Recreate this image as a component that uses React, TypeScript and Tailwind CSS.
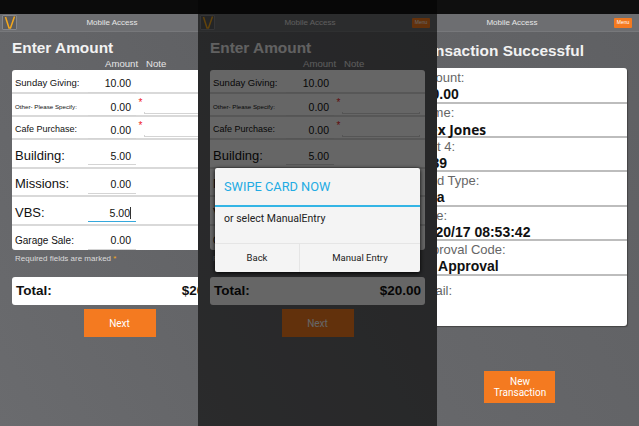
const rows = [
  { label: "Sunday Giving:", value: "10.00", h: "h-[24px]", labelClass: "text-[9.5px]" },
  { label: "Other- Please Specify:", value: "0.00", h: "h-[23px]", labelClass: "text-[6.2px]", note: true },
  { label: "Cafe Purchase:", value: "0.00", h: "h-[23px]", labelClass: "text-[9px]", note: true },
  { label: "Building:", value: "5.00", h: "h-[29px]", labelClass: "text-[13px]" },
  { label: "Missions:", value: "0.00", h: "h-[28px]", labelClass: "text-[13px]" },
  { label: "VBS:", value: "5.00", h: "h-[29px]", labelClass: "text-[13px]", active: true },
  { label: "Garage Sale:", value: "0.00", h: "h-[24px]", labelClass: "text-[10px]" },
];

const details = [
  { label: "Amount:", value: "$20.00", h: "h-[36px]", valueClass: "text-[14px]" },
  { label: "Name:", value: "Alex Jones", h: "h-[34px]", valueClass: "text-[13.7px] font-['Open_Sans',sans-serif]" },
  { label: "Last 4:", value: "6789", h: "h-[34px]", valueClass: "text-[14px]" },
  { label: "Card Type:", value: "Visa", h: "h-[35px]", valueClass: "text-[14px]" },
  { label: "Date:", value: "01/20/17 08:53:42", h: "h-[34px]", valueClass: "text-[14px]" },
  { label: "Approval Code:", value: "No Approval", h: "h-[35px]", valueClass: "text-[14px]" },
];

function Header() {
  return (
    <div className="flex h-[17px] items-center justify-between bg-[#6d6e71] pl-[2px] pr-[7px] shadow-[0_1px_0_#77787b]">
      <div className="flex h-[15px] w-[15px] items-center justify-center rounded-[1px] border border-[#85868a] bg-[#5b5c60]">
        <svg viewBox="0 0 12 13" className="h-[13px] w-[12px]">
          <path d="M1.5 1 L5 12 L6.5 12 L10.5 0.5" fill="none" stroke="#f5a81c" strokeWidth="1.5" />
        </svg>
      </div>
      <span className="mr-[7px] text-[8px] text-[#e6e6e6]">Mobile Access</span>
      <div className="flex h-[10px] w-[18px] items-center justify-center rounded-[1px] bg-[#f47a20] text-[5px] text-white">
        Menu
      </div>
    </div>
  );
}

function Underlined({ className, active, children }: { className: string; active?: boolean; children?: React.ReactNode }) {
  return (
    <div className={`flex h-[18px] shrink-0 flex-col ${className}`}>
      <div className="flex flex-1 items-center justify-end pr-[5px] pt-[4px] text-[10.5px] text-[#111]">{children}</div>
      <div className={`h-[2px] border border-t-0 ${active ? "border-[#35a8dc]" : "border-[#d4d4d4]"}`} />
    </div>
  );
}

function AmountRow({ row }: { row: (typeof rows)[number] }) {
  return (
    <div className={`flex items-center border-b-2 border-[#d9d9d9] pl-[3px] last:border-b-0 ${row.h}`}>
      <span className={`mt-[4px] w-[73px] shrink-0 whitespace-nowrap text-[#111] ${row.labelClass}`}>{row.label}</span>
      <Underlined className="w-[48px]" active={row.active}>
        {row.value}
        {row.active && <span className="h-[12px] w-px bg-[#333]" />}
      </Underlined>
      {row.note && (
        <>
          <span className="mb-[3px] ml-[1px] w-[7px] text-center text-[10px] leading-none text-[#f01c24]">*</span>
          <Underlined className="w-[78px]" />
        </>
      )}
    </div>
  );
}

function EnterAmount() {
  return (
    <div className="flex h-[412px] w-[239px] flex-col bg-[#636467] bg-gradient-to-tr from-[#6a6b6e] to-[#5f6063]">
      <Header />
      <div className="flex flex-col px-[12px]">
        <h1 className="mt-[8px] text-[15.4px] font-bold leading-[18px] text-[#f2f2f2]">Enter Amount</h1>
        <div className="mt-[2px] flex h-[11px] items-center pl-[93px] text-[9.6px] text-[#e6e6e6]">
          <span className="w-[41px]">Amount</span>
          <span>Note</span>
        </div>
        <div className="overflow-hidden rounded-[3px] bg-white">
          {rows.map((row) => (
            <AmountRow key={row.label} row={row} />
          ))}
        </div>
        <p className="mt-[4px] pl-[3px] text-[8px] leading-[10px] text-[#dcdcdc]">
          Required fields are marked <span className="text-[#f5a81c]">*</span>
        </p>
        <div className="mt-[13px] flex h-[28px] items-center justify-between rounded-[3px] bg-white px-[4px] text-[13.5px] font-bold text-[#111]">
          <span>Total:</span>
          <span>$20.00</span>
        </div>
        <button className="mx-auto mt-[4px] h-[28px] w-[72px] bg-[#f47a20] font-['Roboto',sans-serif] text-[10px] text-white">
          Next
        </button>
      </div>
    </div>
  );
}

function Success() {
  return (
    <div className="flex h-[412px] w-[239px] flex-col bg-[#636467] bg-gradient-to-tr from-[#67686b] to-[#5f6063]">
      <Header />
      <div className="flex flex-col px-[12px]">
        <h1 className="mt-[11px] whitespace-nowrap text-[15.4px] font-bold leading-[18px] text-[#f2f2f2]">
          Transaction Successful
        </h1>
        <div className="mt-[8px] overflow-hidden rounded-[3px] bg-white shadow-[1px_1px_1px_#444]">
          {details.map((d) => (
            <div key={d.label} className={`flex flex-col justify-center border-b-2 border-[#bdbdbd] px-[4px] pt-[2px] ${d.h}`}>
              <span className="text-[13px] leading-[16px] text-[#666]">{d.label}</span>
              <span className={`font-bold leading-[17px] text-[#111] ${d.valueClass}`}>{d.value}</span>
            </div>
          ))}
          <div className="h-[50px] px-[4px] pt-[2px]">
            <span className="text-[13px] leading-[16px] text-[#666]">Email:</span>
          </div>
        </div>
        <button className="mx-auto mt-[45px] h-[32px] w-[71px] bg-[#f47a20] pl-[1px] font-['Roboto',sans-serif] text-[10px] leading-[11px] text-white">
          New
          <br />
          Transaction
        </button>
      </div>
    </div>
  );
}

function SwipeDialog() {
  return (
    <div className="absolute left-[17px] top-[154px] w-[205px] rounded-[2px] bg-[#f4f4f4] font-['Roboto',sans-serif] shadow-[0_1px_4px_#000]">
      <div className="flex h-[39px] items-center border-b-2 border-[#33b5e5] pl-[9px] text-[12.8px] text-[#22abe3]">
        SWIPE CARD NOW
      </div>
      <div className="h-[36px] pl-[9px] pt-[5px] text-[10.5px] leading-[14px] text-[#222]">or select ManualEntry</div>
      <div className="flex h-[29px] border-t border-[#e5e5e5] text-[9.5px] text-[#222]">
        <div className="flex w-[85px] items-center justify-center border-r border-[#e5e5e5]">Back</div>
        <div className="flex flex-1 items-center justify-center">Manual Entry</div>
      </div>
    </div>
  );
}

export default function App() {
  return (
    <div className="flex h-[426px] w-[639px] flex-col overflow-hidden bg-[#111] font-['Liberation_Sans',sans-serif]">
      <div className="flex h-[14px] shrink-0">
        <div className="w-[198px] bg-[#0b0b0b]" />
        <div className="w-[239px] bg-[#070707]" />
        <div className="flex-1 bg-[#0f0f0f]" />
      </div>
      <div className="flex flex-1">
        <div className="w-[198px] overflow-hidden">
          <EnterAmount />
        </div>
        <div className="relative w-[239px]">
          <EnterAmount />
          <div className="absolute inset-0 bg-black/60" />
          <SwipeDialog />
        </div>
        <div className="flex w-[202px] justify-end overflow-hidden">
          <div className="shrink-0">
            <Success />
          </div>
        </div>
      </div>
    </div>
  );
}
